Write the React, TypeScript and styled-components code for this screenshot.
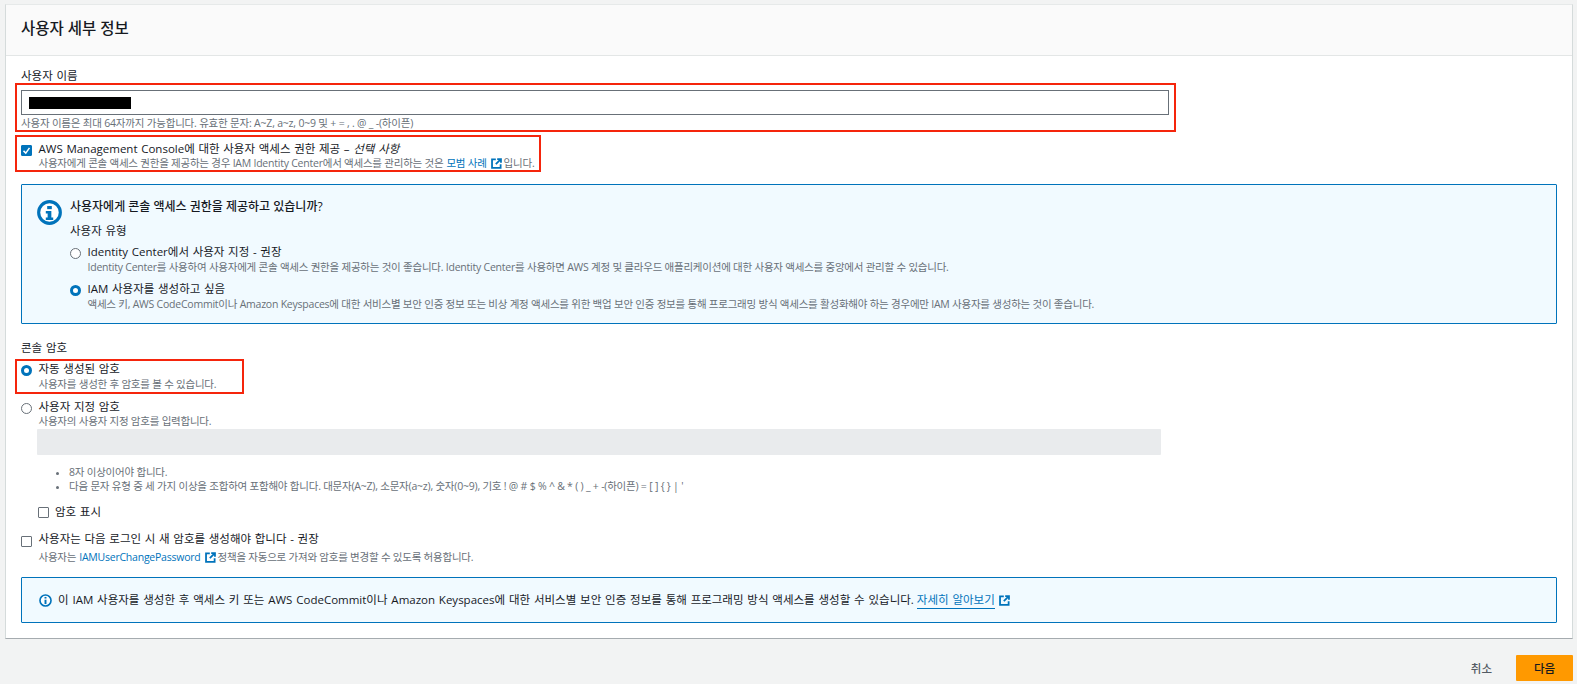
import React from "react";
import styled, { createGlobalStyle } from "styled-components";

const Global = createGlobalStyle`
  html, body { margin: 0; padding: 0; background: #f2f3f3; }
  body {
    font-family: "Open Sans", "Noto Sans CJK KR", sans-serif;
    color: #16191f;
    font-size: 12px;
    line-height: 14px;
    overflow: hidden;
  }
`;

const Page = styled.div`
  width: 1577px;
  height: 684px;
  padding: 4px 4px 0 5px;
  box-sizing: border-box;
  display: flex;
  flex-direction: column;
`;

const Card = styled.section`
  background: #fff;
  height: 635px;
  box-sizing: border-box;
  border-left: 1px solid #d5dbdb;
  border-right: 1px solid #d5dbdb;
  border-top: 1px solid #e6e9e9;
  border-bottom: 1px solid #a5abaf;
  display: flex;
  flex-direction: column;
`;

const Header = styled.header`
  height: 51px;
  box-sizing: border-box;
  background: #fafafa;
  border-bottom: 1px solid #e3e6e6;
  padding: 0 0 5px 15px;
  display: flex;
  align-items: center;
`;

const Title = styled.h2`
  margin: 0;
  font-size: 15.5px;
  font-weight: 500;
  line-height: 20px;
  color: #16191f;
`;

const Body = styled.div`
  padding: 13px 15px 0 15px;
  display: flex;
  flex-direction: column;
`;

const FieldLabel = styled.div<{ $top?: number }>`
  font-size: 11.5px;
  line-height: 14px;
  word-spacing: 0.8px;
  color: #16191f;
  margin-top: ${(p) => p.$top ?? 0}px;
`;

const Highlight = styled.div<{ $width: number; $top: number; $bottom: number; $right?: number }>`
  position: relative;
  width: ${(p) => p.$width}px;
  &::after {
    content: "";
    position: absolute;
    left: -6px;
    right: ${(p) => p.$right ?? -6}px;
    top: ${(p) => p.$top}px;
    bottom: ${(p) => p.$bottom}px;
    border: 2px solid #f5250c;
    pointer-events: none;
  }
`;

const TextBox = styled.div`
  margin-top: 7px;
  height: 25px;
  box-sizing: border-box;
  border: 1px solid #687078;
  background: #fff;
  display: flex;
  align-items: center;
  padding-left: 7px;
`;

const Redacted = styled.div`
  width: 102px;
  height: 12px;
  background: #000;
`;

const Hint = styled.div`
  margin-top: 1px;
  font-size: 10.5px;
  line-height: 14px;
  letter-spacing: -0.2px;
  color: #687078;
`;

const OptionRow = styled.div<{ $top?: number }>`
  display: grid;
  grid-template-columns: 11px 1fr;
  column-gap: 6.5px;
  margin-top: ${(p) => p.$top ?? 0}px;
`;

const OptionText = styled.div`
  font-size: 11.5px;
  line-height: 14px;
  word-spacing: 0.7px;
  color: #16191f;
  white-space: nowrap;
`;

const Muted = styled.div<{ $top?: number }>`
  font-size: 10.5px;
  line-height: 14px;
  letter-spacing: -0.23px;
  color: #687078;
  white-space: nowrap;
  margin-top: ${(p) => p.$top ?? 0}px;
  display: flex;
  align-items: center;
`;

const Check = styled.span<{ $on?: boolean; $top?: number }>`
  width: 11px;
  height: 11px;
  box-sizing: border-box;
  margin-top: ${(p) => p.$top ?? 3}px;
  border: 1px solid ${(p) => (p.$on ? "#0073bb" : "#687078")};
  background: ${(p) => (p.$on ? "#0073bb" : "#fff")};
  border-radius: 1px;
  display: block;
  & svg { display: block; }
`;

const Radio = styled.span<{ $on?: boolean }>`
  width: 11px;
  height: 11px;
  box-sizing: border-box;
  margin-top: 3px;
  border-radius: 50%;
  display: block;
  background: #fff;
  border: ${(p) => (p.$on ? "3.5px solid #0073bb" : "1px solid #687078")};
`;

const Link = styled.a<{ $underline?: boolean }>`
  color: #0073bb;
  text-decoration: none;
  margin-left: 3px;
  border-bottom: ${(p) => (p.$underline ? "1px solid #0073bb" : "none")};
  line-height: ${(p) => (p.$underline ? 16 : 14)}px;
`;

const ExtIcon = styled.svg`
  width: 11px;
  height: 11px;
  margin: 0 2px 0 4px;
  flex: none;
`;

const InfoPanel = styled.div<{ $height: number; $top: number }>`
  margin-top: ${(p) => p.$top}px;
  width: 1536px;
  height: ${(p) => p.$height}px;
  box-sizing: border-box;
  background: #f1faff;
  border: 1px solid #0073bb;
  border-radius: 1px;
`;

const LargePanelGrid = styled(InfoPanel)`
  padding: 15px 0 0 15px;
  display: grid;
  grid-template-columns: 25px 1fr;
  column-gap: 8px;
  align-content: start;
`;

const PanelHeading = styled.div`
  font-size: 12px;
  font-weight: 500;
  line-height: 14px;
  color: #16191f;
`;

const PanelSub = styled(FieldLabel)`
  margin-top: 10px;
  margin-bottom: 7px;
`;

const PanelIcon = styled.svg`
  width: 25px;
  height: 25px;
`;

const PasswordBox = styled.div`
  margin: 1px 0 0 -1.5px;
  height: 26px;
  width: 1124px;
  border-radius: 1px;
  background: #e9ebed;
`;

const Rules = styled.ul`
  margin: 10px 0 0 0;
  padding: 0 0 0 48px;
  color: #687078;
  font-size: 10.5px;
  line-height: 14px;
  letter-spacing: -0.22px;
  white-space: nowrap;
  & li::marker { font-size: 9px; }
`;

const Indented = styled.div`
  margin-left: 16.5px;
`;

const SmallPanel = styled(InfoPanel)`
  display: flex;
  align-items: center;
  padding-left: 17px;
  font-size: 11.5px;
  line-height: 16px;
  word-spacing: 0.85px;
  white-space: nowrap;
  color: #16191f;
`;

const SmallIcon = styled.svg`
  width: 13px;
  height: 13px;
  margin-right: 6px;
  flex: none;
`;

const Footer = styled.footer`
  display: flex;
  justify-content: flex-end;
  align-items: center;
  margin-top: 16px;
`;

const CancelButton = styled.button`
  background: none;
  border: none;
  padding: 0;
  margin-right: 24px;
  font: 500 11.5px "Open Sans", "Noto Sans CJK KR", sans-serif;
  color: #545b64;
`;

const NextButton = styled.button`
  width: 57px;
  height: 26px;
  border: none;
  border-radius: 1px;
  background: #ff9900;
  font: 500 11.5px "Open Sans", "Noto Sans CJK KR", sans-serif;
  color: #16191f;
`;

const Italic = styled.i`
  font-style: italic;
`;

const External = () => (
  <ExtIcon viewBox="0 0 16 16" fill="none" stroke="#0073bb" strokeWidth="2.6">
    <path d="M7 2H1.5v12.5H14V9" />
    <path d="M9 1.5h5.5V7M14 2 7 9" />
  </ExtIcon>
);

const Tick = () => (
  <svg viewBox="0 0 12 12" width="9" height="9" fill="none" stroke="#fff" strokeWidth="2">
    <path d="M2 6.5 5 9.5 10 2.5" />
  </svg>
);

export default function App() {
  return (
    <Page>
      <Global />
      <Card>
        <Header>
          <Title>사용자 세부 정보</Title>
        </Header>
        <Body>
          <FieldLabel>사용자 이름</FieldLabel>
          <Highlight $width={1148} $top={0} $bottom={-2} $right={-7}>
            <TextBox>
              <Redacted />
            </TextBox>
            <Hint>사용자 이름은 최대 64자까지 가능합니다. 유효한 문자: A~Z, a~z, 0~9 및 + = , . @ _ -(하이픈)</Hint>
          </Highlight>
          <Highlight $width={514} $top={5} $bottom={-2}>
            <OptionRow $top={12}>
              <Check $on><Tick /></Check>
              <div>
                <OptionText>AWS Management Console에 대한 사용자 액세스 권한 제공 – <Italic>선택 사항</Italic></OptionText>
                <Muted>
                  사용자에게 콘솔 액세스 권한을 제공하는 경우 IAM Identity Center에서 액세스를 관리하는 것은
                  <Link>모범 사례</Link>
                  <External />입니다.
                </Muted>
              </div>
            </OptionRow>
          </Highlight>

          <LargePanelGrid $height={140} $top={14}>
            <PanelIcon viewBox="0 0 27 27">
              <circle cx="13.5" cy="13.5" r="11.7" fill="#fff" stroke="#0073bb" strokeWidth="3.4" />
              <rect x="11" y="6.5" width="5" height="3.4" fill="#0073bb" />
              <path d="M9.5 12h6v7h2v2.6H9.5V19h2v-4.4h-2z" fill="#0073bb" />
            </PanelIcon>
            <div>
              <PanelHeading>사용자에게 콘솔 액세스 권한을 제공하고 있습니까?</PanelHeading>
              <PanelSub>사용자 유형</PanelSub>
              <OptionRow>
                <Radio />
                <div>
                  <OptionText>Identity Center에서 사용자 지정 - 권장</OptionText>
                  <Muted $top={1}>Identity Center를 사용하여 사용자에게 콘솔 액세스 권한을 제공하는 것이 좋습니다. Identity Center를 사용하면 AWS 계정 및 클라우드 애플리케이션에 대한 사용자 액세스를 중앙에서 관리할 수 있습니다.</Muted>
                </div>
              </OptionRow>
              <OptionRow $top={8}>
                <Radio $on />
                <div>
                  <OptionText>IAM 사용자를 생성하고 싶음</OptionText>
                  <Muted $top={1}>액세스 키, AWS CodeCommit이나 Amazon Keyspaces에 대한 서비스별 보안 인증 정보 또는 비상 계정 액세스를 위한 백업 보안 인증 정보를 통해 프로그래밍 방식 액세스를 활성화해야 하는 경우에만 IAM 사용자를 생성하는 것이 좋습니다.</Muted>
                </div>
              </OptionRow>
            </div>
          </LargePanelGrid>

          <FieldLabel $top={17}>콘솔 암호</FieldLabel>
          <Highlight $width={217} $top={4} $bottom={-3}>
            <OptionRow $top={7}>
              <Radio $on />
              <div>
                <OptionText>자동 생성된 암호</OptionText>
                <Muted $top={1}>사용자를 생성한 후 암호를 볼 수 있습니다.</Muted>
              </div>
            </OptionRow>
          </Highlight>
          <OptionRow $top={9}>
            <Radio />
            <div>
              <OptionText>사용자 지정 암호</OptionText>
              <Muted>사용자의 사용자 지정 암호를 입력합니다.</Muted>
              <PasswordBox />
            </div>
          </OptionRow>
          <Rules>
            <li>8자 이상이어야 합니다.</li>
            <li>다음 문자 유형 중 세 가지 이상을 조합하여 포함해야 합니다. 대문자(A~Z), 소문자(a~z), 숫자(0~9), 기호 ! @ # $ % ^ &amp; * ( ) _ + -(하이픈) = [ ] {"{ }"} | '</li>
          </Rules>
          <Indented>
            <OptionRow $top={12}>
              <Check $top={2} />
              <OptionText>암호 표시</OptionText>
            </OptionRow>
          </Indented>
          <OptionRow $top={13}>
            <Check $top={4} />
            <div>
              <OptionText>사용자는 다음 로그인 시 새 암호를 생성해야 합니다 - 권장</OptionText>
              <Muted $top={4}>
                사용자는
                <Link>IAMUserChangePassword</Link>
                <External />정책을 자동으로 가져와 암호를 변경할 수 있도록 허용합니다.
              </Muted>
            </div>
          </OptionRow>
          <SmallPanel $height={46} $top={13}>
            <SmallIcon viewBox="0 0 16 16">
              <circle cx="8" cy="8" r="6.8" fill="#fff" stroke="#0073bb" strokeWidth="2" />
              <rect x="6.8" y="3.6" width="2.4" height="2" fill="#0073bb" />
              <rect x="6.8" y="7" width="2.4" height="5.4" fill="#0073bb" />
            </SmallIcon>
            이 IAM 사용자를 생성한 후 액세스 키 또는 AWS CodeCommit이나 Amazon Keyspaces에 대한 서비스별 보안 인증 정보를 통해 프로그래밍 방식 액세스를 생성할 수 있습니다.
            <Link $underline>자세히 알아보기</Link>
            <External />
          </SmallPanel>
        </Body>
      </Card>
      <Footer>
        <CancelButton>취소</CancelButton>
        <NextButton>다음</NextButton>
      </Footer>
    </Page>
  );
}
